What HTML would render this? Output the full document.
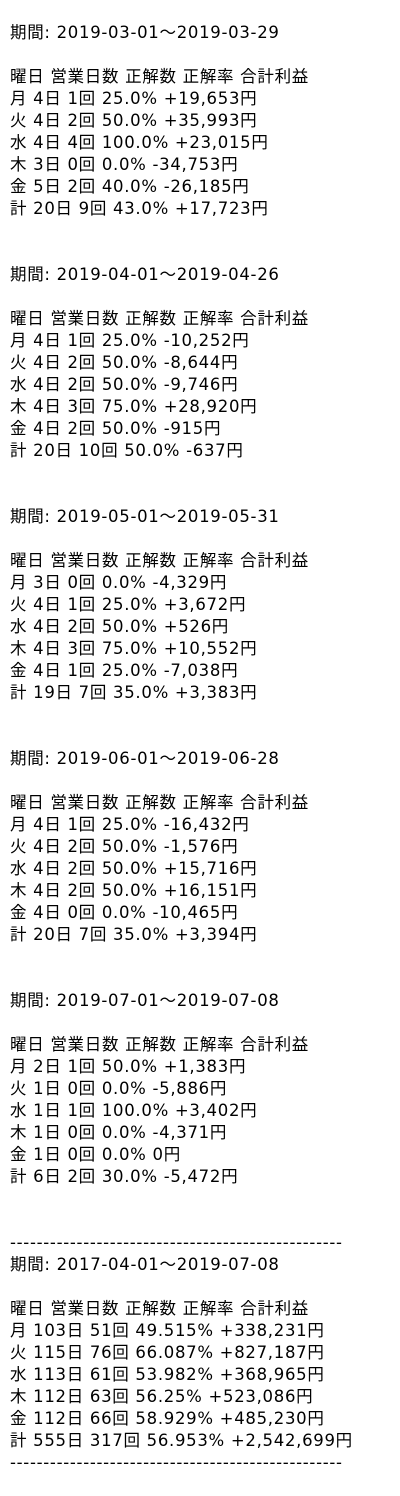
<!DOCTYPE html>
<html><head><meta charset="utf-8"><style>
body{margin:0;background:#fff;}
pre{margin:0;padding:22px 0 0 10px;font-family:"DejaVu Sans","Noto Sans CJK JP",sans-serif;font-size:16.5px;letter-spacing:0.7px;line-height:22px;color:#000;white-space:pre;}
</style></head><body><pre>期間: 2019-03-01～2019-03-29

曜日 営業日数 正解数 正解率 合計利益
月 4日 1回 25.0% +19,653円
火 4日 2回 50.0% +35,993円
水 4日 4回 100.0% +23,015円
木 3日 0回 0.0% -34,753円
金 5日 2回 40.0% -26,185円
計 20日 9回 43.0% +17,723円


期間: 2019-04-01～2019-04-26

曜日 営業日数 正解数 正解率 合計利益
月 4日 1回 25.0% -10,252円
火 4日 2回 50.0% -8,644円
水 4日 2回 50.0% -9,746円
木 4日 3回 75.0% +28,920円
金 4日 2回 50.0% -915円
計 20日 10回 50.0% -637円


期間: 2019-05-01～2019-05-31

曜日 営業日数 正解数 正解率 合計利益
月 3日 0回 0.0% -4,329円
火 4日 1回 25.0% +3,672円
水 4日 2回 50.0% +526円
木 4日 3回 75.0% +10,552円
金 4日 1回 25.0% -7,038円
計 19日 7回 35.0% +3,383円


期間: 2019-06-01～2019-06-28

曜日 営業日数 正解数 正解率 合計利益
月 4日 1回 25.0% -16,432円
火 4日 2回 50.0% -1,576円
水 4日 2回 50.0% +15,716円
木 4日 2回 50.0% +16,151円
金 4日 0回 0.0% -10,465円
計 20日 7回 35.0% +3,394円


期間: 2019-07-01～2019-07-08

曜日 営業日数 正解数 正解率 合計利益
月 2日 1回 50.0% +1,383円
火 1日 0回 0.0% -5,886円
水 1日 1回 100.0% +3,402円
木 1日 0回 0.0% -4,371円
金 1日 0回 0.0% 0円
計 6日 2回 30.0% -5,472円


--------------------------------------------------
期間: 2017-04-01～2019-07-08

曜日 営業日数 正解数 正解率 合計利益
月 103日 51回 49.515% +338,231円
火 115日 76回 66.087% +827,187円
水 113日 61回 53.982% +368,965円
木 112日 63回 56.25% +523,086円
金 112日 66回 58.929% +485,230円
計 555日 317回 56.953% +2,542,699円
--------------------------------------------------</pre></body></html>
